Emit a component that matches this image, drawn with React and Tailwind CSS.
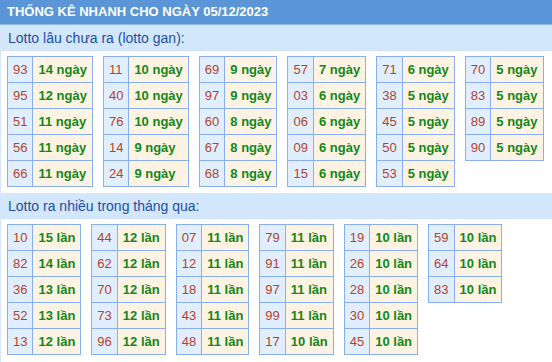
import React from 'react';

const ganTables = [
    [['93', '14'], ['95', '12'], ['51', '11'], ['56', '11'], ['66', '11']],
    [['11', '10'], ['40', '10'], ['76', '10'], ['14', '9'], ['24', '9']],
    [['69', '9'], ['97', '9'], ['60', '8'], ['67', '8'], ['68', '8']],
    [['57', '7'], ['03', '6'], ['06', '6'], ['09', '6'], ['15', '6']],
    [['71', '6'], ['38', '5'], ['45', '5'], ['50', '5'], ['53', '5']],
    [['70', '5'], ['83', '5'], ['89', '5'], ['90', '5']],
];

const hotTables = [
    [['10', '15'], ['82', '14'], ['36', '13'], ['52', '13'], ['13', '12']],
    [['44', '12'], ['62', '12'], ['70', '12'], ['73', '12'], ['96', '12']],
    [['07', '11'], ['12', '11'], ['18', '11'], ['43', '11'], ['48', '11']],
    [['79', '11'], ['91', '11'], ['97', '11'], ['99', '11'], ['17', '10']],
    [['19', '10'], ['26', '10'], ['28', '10'], ['30', '10'], ['45', '10']],
    [['59', '10'], ['64', '10'], ['83', '10']],
];

// Bảng nhỏ: cột số + cột giá trị
const MiniTable = ({ rows, unit }) => (
    <table className="border-collapse text-[13px] leading-none">
        <tbody>
            {rows.map(([num, val], i) => (
                <tr key={i} className="h-[26px]">
                    <td className="border border-[#8aaff0] bg-[#e1eefd] px-[5px] text-[#b5432b]">{num}</td>
                    <td className="border border-[#8aaff0] bg-[#fdf3e2] px-[5px] font-bold text-[#15861a] whitespace-nowrap">
                        {val} {unit}
                    </td>
                </tr>
            ))}
        </tbody>
    </table>
);

const SectionBar = ({ children }) => (
    <div className="h-[26px] bg-[#d3e7fc] px-[7px] flex items-center text-[14px] text-[#1f4fa5]">
        {children}
    </div>
);

export default function App() {
    return (
        <div className="w-[552px] h-[362px] bg-white font-['Liberation_Sans',Arial,sans-serif] overflow-hidden">
            {/* Tiêu đề */}
            <div className="h-[25px] bg-[#5a96d7] border-b border-[#8cb8e8] px-[7px] flex items-center text-white font-bold text-[13px]">
                THỐNG KÊ NHANH CHO NGÀY 05/12/2023
            </div>

            <div className="border-l border-[#d6e6f8]">
                <SectionBar>Lotto lâu chưa ra (lotto gan):</SectionBar>
                <div className="flex items-start gap-[10px] pl-[6px] pt-[5px] pb-[6px]">
                    {ganTables.map((rows, i) => (
                        <MiniTable key={i} rows={rows} unit="ngày" />
                    ))}
                </div>

                <SectionBar>Lotto ra nhiều trong tháng qua:</SectionBar>
                <div className="flex items-start gap-[10px] pl-[6px] pt-[5px] pb-[10px]">
                    {hotTables.map((rows, i) => (
                        <MiniTable key={i} rows={rows} unit="lần" />
                    ))}
                </div>
            </div>
        </div>
    );
}
